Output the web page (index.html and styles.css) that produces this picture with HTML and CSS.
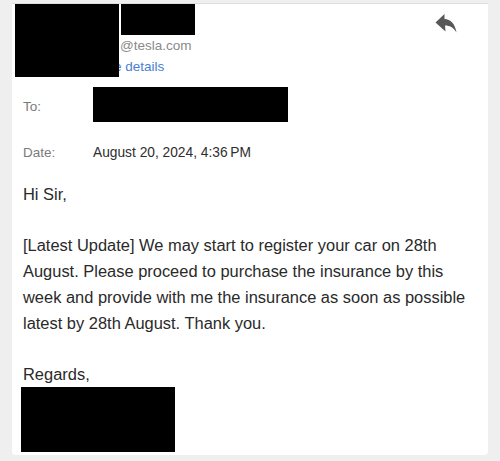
FILE: index.html
```html
<!DOCTYPE html>
<html lang="en">
<head>
<meta charset="utf-8">
<title>Email</title>
<link rel="stylesheet" href="styles.css">
</head>
<body>
<div class="card">
  <div class="header">
    <div class="redact avatar"></div>
    <div class="sender">
      <div class="redact name"></div>
      <div class="addr">@tesla.com</div>
      <div class="details">e details</div>
    </div>
    <button class="reply" aria-label="Reply">
      <svg width="22" height="20" viewBox="0 0 22 20">
        <path d="M0.5 9.5 L9.5 1 L9.5 6 C15.5 6.3 20 10.5 21.5 19.5 C18.5 14.5 14.5 12.6 10 12.6 L10.5 18.5 Z" fill="#585858"/>
      </svg>
    </button>
  </div>
  <div class="row to-row">
    <div class="label">To:</div>
    <div class="redact to"></div>
  </div>
  <div class="row date-row">
    <div class="label">Date:</div>
    <div class="value">August 20, 2024, 4:36&#8201;PM</div>
  </div>
  <div class="body">
    <p>Hi Sir,</p>
    <p>[Latest Update] We may start to register your car on 28th August. Please proceed to purchase the insurance by this week and provide with me the insurance as soon as possible latest by 28th August. Thank you.</p>
    <p>Regards,</p>
    <div class="redact sig"></div>
  </div>
</div>
</body>
</html>
```

FILE: styles.css
```css
html, body {
  margin: 0;
  padding: 0;
  background: #efefef;
}
body {
  font-family: "Liberation Sans", Arial, sans-serif;
  padding-top: 3px;
}
.card {
  margin: 0 12px;
  background: #fff;
  border-top: 1px solid #dedede;
  border-radius: 0 0 4px 4px;
  height: 452px;
  box-sizing: border-box;
  padding-right: 10px;
}
.redact {
  background: #000;
}
.header {
  display: flex;
  align-items: flex-start;
  padding-left: 3px;
  padding-right: 21px;
}
.avatar {
  width: 104px;
  height: 73px;
  position: relative;
  z-index: 1;
  flex: none;
}
.sender {
  display: flex;
  flex-direction: column;
}
.name {
  width: 74px;
  height: 31px;
  margin-left: 2px;
}
.addr {
  font-size: 13.5px;
  line-height: 17px;
  color: #8a8a8a;
  margin-top: 2px;
  padding-left: 1px;
}
.details {
  font-size: 13.5px;
  line-height: 17px;
  color: #4a7fd3;
  margin-top: 4px;
  margin-left: -5px;
}
.reply {
  margin-left: auto;
  margin-top: 9px;
  border: 0;
  padding: 0;
  background: none;
  width: 22px;
  height: 20px;
  display: block;
}
.reply svg {
  display: block;
}
.row {
  display: flex;
  padding-left: 11px;
}
.label {
  width: 70px;
  flex: none;
  font-size: 13.5px;
  line-height: 17px;
  color: #7b7b7b;
}
.to-row {
  margin-top: 10px;
  align-items: flex-start;
}
.to-row .label {
  margin-top: 11px;
}
.to {
  width: 195px;
  height: 35px;
}
.date-row {
  margin-top: 21px;
  align-items: baseline;
  line-height: 20px;
}
.value {
  font-size: 13.75px;
  line-height: 20px;
  color: #2e2e2e;
}
.body {
  margin-top: 19px;
  padding-left: 11px;
  font-size: 16.45px;
  line-height: 25.7px;
  color: #2a2a2a;
}
.body p {
  margin: 0 0 25.7px 0;
}
.body p:nth-of-type(3) {
  margin-bottom: 0;
}
.sig {
  width: 154px;
  height: 65px;
  margin-left: -2px;
  margin-top: -1px;
}
```
